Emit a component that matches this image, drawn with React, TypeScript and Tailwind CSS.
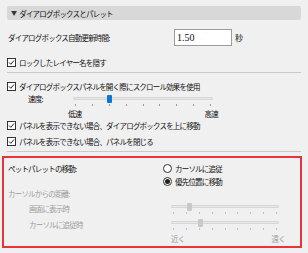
const jp = "font-['Noto_Sans_CJK_JP',sans-serif] text-[7.5px] leading-[11px] tracking-[-0.8px]";

function Check() {
  return (
    <span className="flex h-[9px] w-[9px] shrink-0 items-center justify-center border border-[#333] bg-white">
      <svg width="7" height="7" viewBox="0 0 7 7">
        <path d="M1 3.5 L2.8 5.3 L6 1.5" fill="none" stroke="#222" strokeWidth="1" />
      </svg>
    </span>
  );
}

function CheckRow({ label, className }: { label: string; className?: string }) {
  return (
    <div className={`flex items-center gap-[3px] pl-[7px] ${className ?? ""}`}>
      <Check />
      <span>{label}</span>
    </div>
  );
}

function Radio({ on, label }: { on?: boolean; label: string }) {
  return (
    <div className="flex h-[12px] items-center gap-[3px]">
      <span className="flex h-[9px] w-[9px] items-center justify-center rounded-full border border-[#333] bg-white">
        {on && <span className="h-[5px] w-[5px] rounded-full bg-[#222]" />}
      </span>
      <span>{label}</span>
    </div>
  );
}

function Slider({ width, thumb, disabled }: { width: number; thumb: number; disabled?: boolean }) {
  return (
    <div className="relative h-[13px] shrink-0" style={{ width }}>
      <div className="absolute left-0 right-0 top-[3px] h-[3px] rounded-[1px] border border-[#d6d6d6] bg-[#e7e7e7]" />
      <div
        className={`absolute top-[1px] h-[8px] w-[5px] rounded-[1px] ${disabled ? "bg-[#c9c9c9]" : "bg-[#0a78d7]"}`}
        style={{ left: thumb - 2 }}
      />
      <div className="absolute left-0 right-0 top-[10px] flex justify-between px-[2px]">
        {Array.from({ length: 9 }).map((_, i) => (
          <span key={i} className={`h-[2px] w-px ${disabled ? "bg-[#c4c4c4]" : "bg-[#9a9a9a]"}`} />
        ))}
      </div>
    </div>
  );
}

export default function App() {
  return (
    <div className={`h-[253px] w-[308px] overflow-hidden bg-[#f0f0f0] pt-[6px] text-[#111] ${jp}`}>
      {/* Section header */}
      <div className="mx-[7px] flex h-[14px] items-center rounded-[2px] bg-[#d8d8d8] pl-[4px]">
        <span className="text-[6px] leading-none text-[#333]">▼</span>
        <span className="ml-[3px]">ダイアログボックスとパレット</span>
      </div>

      <div className="mt-[9px] flex h-[17px] items-center pl-[8px]">
        <span className="w-[166px]">ダイアログボックス自動更新時間:</span>
        <div className="flex h-[17px] w-[58px] items-center border border-[#9c9c9c] bg-white pl-[2px] font-['Liberation_Serif',serif] text-[10px] tracking-normal">
          1.50
        </div>
        <span className="ml-[3px] text-[8px]">秒</span>
      </div>

      <CheckRow label="ロックしたレイヤー名を隠す" className="mt-[8px] h-[16px]" />
      <div className="mx-[7px] mt-[2px] h-px bg-[#c9c9c9]" />

      <CheckRow label="ダイアログボックスパネルを開く際にスクロール効果を使用" className="mt-[5px] h-[16px]" />
      <div className="flex h-[13px] pl-[28px]">
        <span className="h-[10px] w-[45px] leading-[10px]">速度:</span>
        <Slider width={140} thumb={36} />
      </div>
      <div className="ml-[68px] mt-[2px] flex h-[9px] w-[150px] justify-between leading-[9px]">
        <span>低速</span>
        <span>高速</span>
      </div>
      <CheckRow label="パネルを表示できない場合、ダイアログボックスを上に移動" className="h-[14px]" />
      <CheckRow label="パネルを表示できない場合、パネルを閉じる" className="mt-[2px] h-[14px]" />
      <div className="mx-[7px] mt-[3px] h-px bg-[#c9c9c9]" />

      {/* Pet palette */}
      <div className="ml-[2px] mt-[4px] h-[92px] w-[300px] border-2 border-[#e8353a]">
        <div className="mt-[4px] flex h-[12px] items-center">
          <span className="w-[159px] pl-[4px]">ペットパレットの移動:</span>
          <Radio label="カーソルに追従" />
        </div>
        <div className="mt-[1px] flex">
          <span className="w-[159px]" />
          <Radio on label="優先位置に移動" />
        </div>
        <div className="flex h-[12px] items-center pl-[4px] text-[#9d9d9d]">カーソルからの距離:</div>
        <div className="mt-[3px] flex items-center">
          <span className="w-[167px] pl-[25px] text-[#9d9d9d]">画面に表示時</span>
          <Slider width={108} thumb={18} disabled />
        </div>
        <div className="mt-[3px] flex items-center">
          <span className="w-[167px] pl-[25px] text-[#9d9d9d]">カーソルに追従時</span>
          <Slider width={108} thumb={29} disabled />
        </div>
        <div className="ml-[167px] mt-[3px] flex h-[10px] w-[114px] justify-between leading-[10px] text-[#9d9d9d]">
          <span>近く</span>
          <span>遠く</span>
        </div>
      </div>
    </div>
  );
}
